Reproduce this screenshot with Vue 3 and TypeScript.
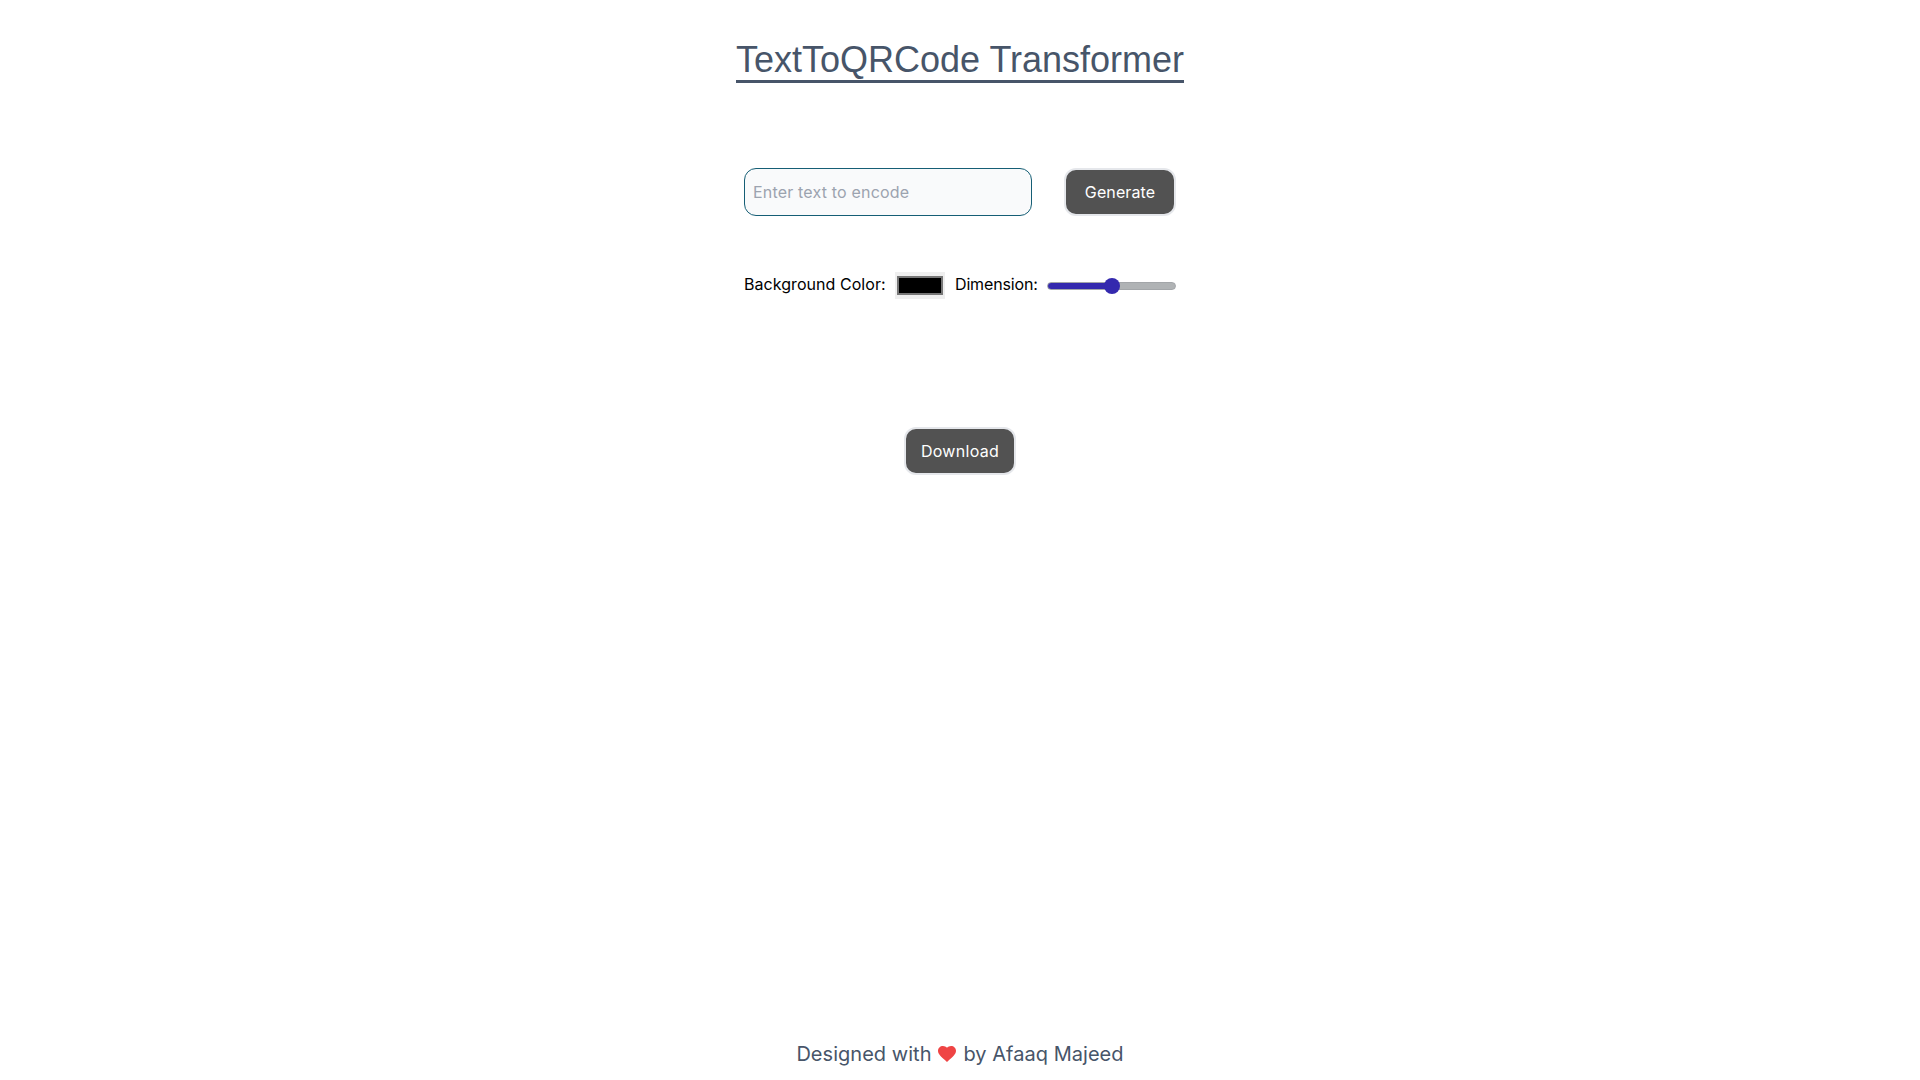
<script setup lang="ts">
import { computed, ref } from 'vue'
const text = ref('')
const color = ref('#000000')
const dimension = ref(50)
const rangeFill = computed(() => ({ '--fill': `${dimension.value}%` }))
</script>

<template>
  <div class="page">
    <h1 class="title">TextToQRCode Transformer</h1>
    <div class="form-row">
      <input v-model="text" class="text-input" type="text" placeholder="Enter text to encode" />
      <button class="btn generate" type="button">Generate</button>
    </div>
    <div class="options-row">
      <label class="opt-label bg-label" for="bg">Background Color:</label>
      <input id="bg" v-model="color" class="color" type="color" />
      <label class="opt-label dim-label" for="dim">Dimension:</label>
      <input id="dim" v-model.number="dimension" class="range" :style="rangeFill" type="range" min="0" max="100" />
    </div>
    <button class="btn download" type="button">Download</button>
    <footer class="footer">
      Designed with
      <svg class="heart" viewBox="2 3 20 18.35" preserveAspectRatio="none" aria-hidden="true">
        <path d="M12 21.35l-1.45-1.32C5.4 15.36 2 12.28 2 8.5 2 5.42 4.42 3 7.5 3c1.74 0 3.41.81 4.5 2.09C13.09 3.81 14.76 3 16.5 3 19.58 3 22 5.42 22 8.5c0 3.78-3.4 6.86-8.55 11.54L12 21.35z" />
      </svg>
      by Afaaq Majeed
    </footer>
  </div>
</template>

<style>
body { margin: 0; background: #fff; }
</style>

<style scoped>
.page {
  height: 1080px;
  display: flex;
  flex-direction: column;
  align-items: center;
  font-family: Inter, "Liberation Sans", sans-serif;
  box-sizing: border-box;
}
.title {
  margin: 40px 0 0;
  font-family: "Liberation Sans", Arial, sans-serif;
  font-size: 36px;
  font-weight: 400;
  line-height: 40px;
  color: #475569;
  border-bottom: 3px solid #475569;
}
.form-row {
  display: flex;
  align-items: center;
  gap: 32px;
  margin-top: 85px;
}
.text-input {
  width: 288px;
  height: 48px;
  box-sizing: border-box;
  padding: 8px;
  border: 1px solid #155e75;
  border-radius: 12px;
  background: #f9fafb;
  font-family: inherit;
  font-size: 16px;
  letter-spacing: 0.18px;
  color: #111827;
  outline: none;
}
.text-input::placeholder { color: #9ca3af; }
.btn {
  box-sizing: border-box;
  width: 112px;
  height: 48px;
  border: 2px solid #e5e7eb;
  border-radius: 12px;
  background: #525252;
  color: #fff;
  font-family: inherit;
  font-size: 16px;
  line-height: 24px;
  font-weight: 400;
  cursor: pointer;
}
.generate { letter-spacing: 0.1px; }
.options-row {
  display: flex;
  align-items: center;
  width: 432px;
  margin-top: 56px;
}
.opt-label {
  align-self: flex-start;
  font-size: 16px;
  line-height: 24px;
  color: #000;
  white-space: nowrap;
}
.bg-label { width: 151px; letter-spacing: 0.05px; }
.dim-label { width: 92px; letter-spacing: -0.15px; }
.color {
  width: 50px;
  height: 27px;
  margin: 0 10px 0 0;
  padding: 0;
  border: 0;
  background: #efefef;
  box-sizing: border-box;
}
.color::-webkit-color-swatch-wrapper { padding: 4px 2px; }
.color::-webkit-color-swatch { border: 2px solid #777; border-radius: 0; }
.range {
  -webkit-appearance: none;
  appearance: none;
  width: 129px;
  height: 16px;
  margin: 0;
  background: transparent;
}
.range::-webkit-slider-runnable-track {
  height: 8px;
  box-sizing: border-box;
  border-radius: 4px;
  border: 1px solid #a3a6a9;
  background: linear-gradient(to right, #3429ae var(--fill), #b0b3b5 var(--fill));
}
.range::-webkit-slider-thumb {
  -webkit-appearance: none;
  appearance: none;
  width: 16px;
  height: 16px;
  margin-top: -5px;
  border-radius: 50%;
  background: #3429ae;
}
.download { margin-top: 128px; letter-spacing: 0.3px; }
.footer {
  margin-top: auto;
  margin-bottom: 12px;
  display: flex;
  align-items: center;
  gap: 7px;
  font-size: 20px;
  letter-spacing: 0.03px;
  line-height: 28px;
  color: #475569;
}
.heart { width: 18px; height: 16px; fill: #ef4444; }
</style>
